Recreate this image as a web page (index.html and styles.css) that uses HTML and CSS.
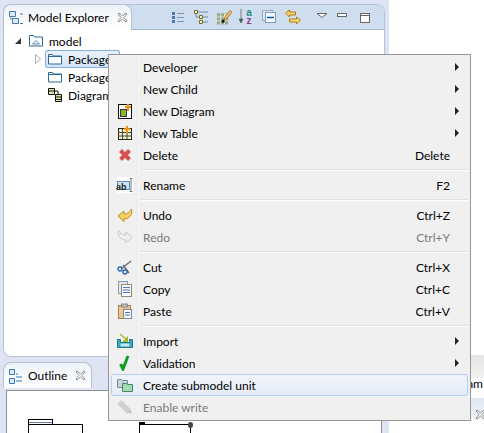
FILE: index.html
```html
<!DOCTYPE html>
<html lang="en">
<head>
    <meta charset="UTF-8">
    <title>Model Explorer</title>
    <link rel="stylesheet" href="styles.css">
</head>
<body>
    <div class="workbench">
        <section class="view explorer">
            <header class="tabbar">
                <div class="tab tab-explorer">
                    <svg class="ico" viewBox="0 0 16 16"><path d="M1.500 1.500h6v5h-6zM4.500 8.500h6v5h-6z" fill="#dfeaf5" stroke="#4a78a8"/><path d="M3 7v3M12 4h3M12 13.500h3" stroke="#4a78a8"/></svg>
                    <span class="tab-text">Model Explorer</span>
                    <svg class="close" viewBox="0 0 11 11"><path d="M1 2l1-1 3.500 3 3.500-3 1 1-3 3.500 3 3.500-1 1-3.500-3-3.500 3-1-1 3-3.500z" fill="#fff" stroke="#8a8a8a"/></svg>
                </div>
                <div class="tools">
                    <svg class="ico" viewBox="0 0 16 16"><path d="M2 3h3v3H2zM2 7h3v3H2zM2 11h3v3H2z" fill="#4a78a8"/><path d="M7 4.500h7M7 8.500h7M7 12.500h7" stroke="#7a96b4"/></svg>
                    <svg class="ico" viewBox="0 0 16 16"><path d="M1.500 1.500h3v3h-3zM6.500 6.500h3v3h-3zM6.500 11.500h3v3h-3z" fill="#f8f0c8" stroke="#7a6a20"/><path d="M5 3h10M10 8h5M10 13h5M3 5v3h3" fill="none" stroke="#6a8ab0"/></svg>
                    <svg class="ico" viewBox="0 0 17 16"><path d="M1 4h12v12H1z" fill="#9aa88a"/><path d="M1 8h12M1 12h12M5 4v12M9 4v12" stroke="#e8e8e0"/><path d="M9 5h4v3H9z" fill="#f6e8b0"/><path d="M9 9l6-8 2 2-6 7-3 2z" fill="#f0c878" stroke="#a07020"/><path d="M6 11h3v3H6z" fill="#111"/></svg>
                    <div class="sort">
                        <svg class="sort-arrow" viewBox="0 0 4 14"><path d="M2 0v10M0 10h4l-2 4z" fill="#555" stroke="#666" stroke-width="0.800"/></svg>
                        <div class="sort-letters"><span class="sort-a">a</span><span class="sort-z">z</span></div>
                    </div>
                    <svg class="ico" viewBox="0 0 16 16"><rect x="0.500" y="1.500" width="10" height="10" fill="#dfe8f0" stroke="#9ab"/><rect x="3.500" y="3.500" width="10" height="10" fill="#f4f8fc" stroke="#7a9ab8"/><path d="M5 8.500h7" stroke="#0a5aa0" stroke-width="1.500"/></svg>
                    <svg class="ico" viewBox="0 0 16 16"><path d="M0.500 4l4-3v2h6v3h-6v2zM15.500 11l-4-3v2h-7v3h7v2z" fill="#f6d878" stroke="#b07810"/></svg>
                    <svg class="ico menu-arrow" viewBox="0 0 16 16"><path d="M3 4.500h10l-5 4z" fill="#fff" stroke="#666"/></svg>
                    <svg class="ico" viewBox="0 0 16 16"><rect x="0.500" y="4.500" width="9" height="3" fill="#fff" stroke="#666"/></svg>
                    <svg class="ico" viewBox="0 0 16 16"><rect x="0.500" y="4.500" width="9" height="9" fill="#fff" stroke="#666"/><path d="M0 6.500h10" stroke="#666"/></svg>
                </div>
            </header>
            <div class="tree">
                <div class="node root">
                    <svg class="twist" viewBox="0 0 6 8"><path d="M6 1v6H0z" fill="#333"/></svg>
                    <div class="cell">
                        <svg class="ico" viewBox="0 0 16 16"><path d="M1.500 2.500h4l1 1.500h8v9h-13z" fill="#fff" stroke="#2a6a9a"/><path d="M4.500 11l3.500-3.500 3.500 3.500z" fill="none" stroke="#5a8ab0"/></svg>
                        <span>model</span>
                    </div>
                </div>
                <div class="node child">
                    <svg class="twist" viewBox="0 0 6 10"><path d="M0.500 0.500l5 4.500-5 4.500z" fill="#fff" stroke="#aaa"/></svg>
                    <div class="cell selected">
                        <svg class="ico" viewBox="0 0 16 16"><path d="M1.500 3.500h4l1 1.500h8v8h-13z" fill="#fff" stroke="#2a6a9a"/><path d="M1.500 5.500h13" stroke="#2a6a9a"/></svg>
                        <span>Package1</span>
                    </div>
                </div>
                <div class="node child">
                    <span class="twist"></span>
                    <div class="cell">
                        <svg class="ico" viewBox="0 0 16 16"><path d="M1.500 3.500h4l1 1.500h8v8h-13z" fill="#fff" stroke="#2a6a9a"/><path d="M1.500 5.500h13" stroke="#2a6a9a"/></svg>
                        <span>Package2</span>
                    </div>
                </div>
                <div class="node child">
                    <span class="twist"></span>
                    <div class="cell">
                        <svg class="ico" viewBox="0 0 16 16"><path d="M1.500 1.500h6v6h-6zM8.500 7.500h6v7h-6z" fill="#d8e8a0" stroke="#111"/><path d="M2 4h5M9 10h5M9 12.500h5M7 4h4v3" fill="none" stroke="#111"/></svg>
                        <span>Diagram</span>
                    </div>
                </div>
            </div>
        </section>
        <section class="lower">
            <div class="outline">
                <header class="tabbar tabbar-plain">
                    <div class="tab tab-outline">
                        <svg class="ico" viewBox="0 0 16 16"><path d="M1.500 1.500h5v5h-5zM1.500 10.500h5v5h-5z" fill="#dfeaf5" stroke="#3a78b8"/><path d="M8 6h2M8 9h6M8 13h6" stroke="#3a78b8"/></svg>
                        <span class="tab-text">Outline</span>
                        <svg class="close" viewBox="0 0 11 11"><path d="M1 2l1-1 3.500 3 3.500-3 1 1-3 3.500 3 3.500-1 1-3.500-3-3.500 3-1-1 3-3.500z" fill="#fff" stroke="#8a8a8a"/></svg>
                    </div>
                </header>
                <div class="canvas">
                    <div class="shape left-shape"><span class="shape-title"></span></div>
                    <div class="shape right-shape"><span class="shape-dot"></span><span class="shape-ring"></span></div>
                </div>
            </div>
            <div class="side">
                <div class="side-tabs"></div>
                <div class="side-label">am</div>
                <header class="side-bar">
                    <svg class="close" viewBox="0 0 11 11"><path d="M1 2l1-1 3.500 3 3.500-3 1 1-3 3.500 3 3.500-1 1-3.500-3-3.500 3-1-1 3-3.500z" fill="#fff" stroke="#8a8a8a"/></svg>
                </header>
            </div>
        </section>
    </div>

    <div class="menu">
        <div class="item"><span class="slot"></span><span class="label">Developer</span><span class="arrow"></span></div>
        <div class="item"><span class="slot"></span><span class="label">New Child</span><span class="arrow"></span></div>
        <div class="item">
            <span class="slot"><svg class="ico" viewBox="0 0 16 16"><rect x="1.500" y="1.500" width="13" height="14" fill="#fff" stroke="#111"/><rect x="3.500" y="6.500" width="6" height="7" fill="#8ab820" stroke="#335"/><path d="M11 1v7M8 4h6" stroke="#f09010" stroke-width="2"/></svg></span>
            <span class="label">New Diagram</span><span class="arrow"></span>
        </div>
        <div class="item">
            <span class="slot"><svg class="ico" viewBox="0 0 16 16"><rect x="1.500" y="3.500" width="13" height="11" fill="#f4f0c0" stroke="#222"/><path d="M1 7.500h14M1 11h14M5.500 4v10M10 4v10" stroke="#444"/><path d="M10 1v7M7 4h6" stroke="#f09010" stroke-width="2"/></svg></span>
            <span class="label">New Table</span><span class="arrow"></span>
        </div>
        <div class="item">
            <span class="slot"><svg class="ico" viewBox="0 0 16 16"><path d="M3.500 3.500l9 9M12.500 3.500l-9 9" stroke="#d9514f" stroke-width="4"/></svg></span>
            <span class="label">Delete</span><span class="key">Delete</span>
        </div>
        <div class="sep"></div>
        <div class="item">
            <span class="slot"><svg class="ico" viewBox="0 0 16 16"><rect x="0" y="0" width="16" height="16" fill="#fff"/><rect x="0.500" y="4.500" width="12" height="8" fill="#cfe2f5" stroke="#5a8ac0"/><path d="M12.500 1.500h3M12.500 14.500h3M14 2v12" stroke="#777"/></svg><span class="ab">ab</span></span>
            <span class="label">Rename</span><span class="key">F2</span>
        </div>
        <div class="sep"></div>
        <div class="item">
            <span class="slot"><svg class="ico" viewBox="0 0 16 16"><path d="M1 9l6-5v3c3 0 5-1 7.500-5 1.500 6-2.500 10-7.500 10v2.500z" fill="#f6d060" stroke="#c09020"/></svg></span>
            <span class="label">Undo</span><span class="key">Ctrl+Z</span>
        </div>
        <div class="item off">
            <span class="slot"><svg class="ico" viewBox="0 0 16 16"><path d="M15 8.500l-6-5.500v3C6 6 3.500 5 1.500 1.500 0 7 4 11 9 11v3z" fill="#f0f0f0" stroke="#c8c8c8"/></svg></span>
            <span class="label">Redo</span><span class="key">Ctrl+Y</span>
        </div>
        <div class="sep"></div>
        <div class="item">
            <span class="slot"><svg class="ico" viewBox="0 0 16 16"><path d="M4.500 9.500L14 2M6 6l6 8" stroke="#667" stroke-width="1.300" fill="none"/><circle cx="3" cy="10" r="2" fill="none" stroke="#2a6aa8" stroke-width="1.400"/><circle cx="8" cy="13" r="2" fill="none" stroke="#2a6aa8" stroke-width="1.400"/></svg></span>
            <span class="label">Cut</span><span class="key">Ctrl+X</span>
        </div>
        <div class="item">
            <span class="slot"><svg class="ico" viewBox="0 0 16 16"><rect x="1.500" y="0.500" width="9" height="12" fill="#dfe6ee" stroke="#8a9aaa"/><rect x="4.500" y="3.500" width="10" height="12" fill="#f6f8fb" stroke="#9a8a70"/><path d="M6 6.500h7M6 9h7M6 11.500h7" stroke="#4a78b0"/></svg></span>
            <span class="label">Copy</span><span class="key">Ctrl+C</span>
        </div>
        <div class="item">
            <span class="slot"><svg class="ico" viewBox="0 0 16 16"><rect x="1.500" y="2.500" width="12" height="13" fill="#e8c890" stroke="#a08050"/><rect x="4.500" y="1" width="6" height="3" fill="#bbb" stroke="#888"/><rect x="6.500" y="6.500" width="8" height="9" fill="#f6f8fb" stroke="#7a8a9a"/><path d="M8 9.500h5M8 12h5" stroke="#4a78b0"/></svg></span>
            <span class="label">Paste</span><span class="key">Ctrl+V</span>
        </div>
        <div class="sep"></div>
        <div class="item">
            <span class="slot"><svg class="ico" viewBox="0 0 16 16"><path d="M0.500 6.500v8h15v-8h-3v3h-9v-3z" fill="#3aa8c0" stroke="#1a7a90"/><path d="M3.500 10.500h9v3h-9z" fill="#bfe6ee"/><path d="M3 1l6 5" stroke="#a8b820" stroke-width="1.500"/><path d="M11 3v6H5z" fill="#a8b820"/></svg></span>
            <span class="label">Import</span><span class="arrow"></span>
        </div>
        <div class="item">
            <span class="slot"><svg class="ico" viewBox="0 0 16 16"><path d="M3.500 9l2.500 5c2-5 3-8 5-13" fill="none" stroke="#10a020" stroke-width="3"/></svg></span>
            <span class="label">Validation</span><span class="arrow"></span>
        </div>
        <div class="item active">
            <span class="slot"><svg class="ico" viewBox="0 0 16 16"><path d="M0.500 2.500h4l1 1h5v7h-10z" fill="#c8d4dc" stroke="#7a8a9a"/><path d="M5.500 6.500h4l1 1h5v7h-10z" fill="#a8d8b0" stroke="#3a8a70"/></svg></span>
            <span class="label">Create submodel unit</span>
        </div>
        <div class="item off">
            <span class="slot"><svg class="ico" viewBox="0 0 16 16"><path d="M2.500 3l10 10" stroke="#d0d0d0" stroke-width="6"/><path d="M13 11l2 4-4-2z" fill="#bbb"/></svg></span>
            <span class="label">Enable write</span>
        </div>
    </div>
</body>
</html>
```

FILE: styles.css
```css
* {
    box-sizing: border-box;
}
body {
    margin: 0;
    width: 484px;
    height: 433px;
    overflow: hidden;
    background: #fff;
    font-family: Lato, "Open Sans", Arial, sans-serif;
    font-size: 12px;
    color: #000;
}
.workbench {
    display: flex;
    flex-direction: column;
    gap: 5px;
    height: 433px;
    padding: 4px 0 0 3px;
    background: linear-gradient(to right, #dfe4f4 0, #dfe4f4 389px, #fff 389px);
}
.ico {
    width: 16px;
    height: 16px;
    flex: none;
    display: block;
}
.close {
    width: 11px;
    height: 11px;
    flex: none;
}
.explorer {
    width: 382px;
    height: 353px;
    background: #fff;
    border: 1px solid #b8c0d4;
    border-top: 0;
    border-radius: 8px;
}
.tabbar {
    display: flex;
    height: 26px;
    background: #cfdeee;
    border-bottom: 1px solid #a9b6c8;
    border-top: 1px solid #b8c0d4;
    border-radius: 8px 8px 0 0;
}
.tabbar-plain {
    height: 28px;
    background: none;
    border: 0;
}
.tab {
    display: flex;
    align-items: center;
    height: 26px;
    padding-left: 4px;
    background: linear-gradient(#eef3f9, #fff);
    border: 1px solid #b8c0d4;
    border-bottom: 0;
    border-radius: 8px 8px 0 0;
}
.tab-explorer {
    width: 129px;
    margin: -1px 0 0 -1px;
}
.tab-outline {
    width: 89px;
}
.tab-text {
    margin: 0 8px 0 4px;
}
.tools {
    display: flex;
    align-items: center;
    gap: 7px;
    margin-left: 38px;
}
.sort {
    display: flex;
    gap: 1px;
    width: 16px;
    height: 16px;
    flex: none;
}
.sort-arrow {
    width: 4px;
    height: 14px;
    flex: none;
}
.sort-letters {
    display: flex;
    flex-direction: column;
    font: 700 10px/8px "Liberation Sans", sans-serif;
    text-align: center;
    width: 10px;
}
.sort-a {
    color: #2a8a80;
}
.sort-z {
    color: #8a3a98;
}
.menu-arrow {
    margin-left: 6px;
}
.tree {
    padding-top: 2px;
}
.node {
    display: flex;
    align-items: center;
    height: 18px;
}
.root {
    padding-left: 11px;
    gap: 7px;
}
.child {
    padding-left: 31px;
    gap: 4px;
}
.twist {
    width: 6px;
    flex: none;
}
.cell {
    display: flex;
    align-items: center;
    gap: 5px;
    width: 75px;
    height: 18px;
    padding-left: 2px;
}
.root .cell {
    padding-left: 0;
}
.selected {
    background: linear-gradient(#eaf3fd, #cfe3f9);
    box-shadow: inset 0 0 0 1px #84acdd;
    border-radius: 3px;
}
.lower {
    display: flex;
    flex: 1;
    min-height: 0;
    justify-content: space-between;
}
.outline {
    display: flex;
    flex-direction: column;
    width: 382px;
}
.canvas {
    position: relative;
    flex: 1;
    margin: 0 3px;
    background: #fff;
    border: 1px solid #8f8f8f;
    border-bottom: 0;
}
.shape {
    position: absolute;
    top: 33px;
    height: 20px;
    border: 1px solid #000;
    background: #fff;
}
.left-shape {
    left: 21px;
    width: 55px;
}
.right-shape {
    left: 132px;
    width: 52px;
}
.shape-title {
    position: absolute;
    left: -1px;
    top: -6px;
    width: 25px;
    height: 6px;
    background: linear-gradient(#fff 40%, #5a7ab8 40%, #5a7ab8 70%, #fff 70%);
    border: 1px solid #000;
}
.shape-dot {
    position: absolute;
    left: -1px;
    top: -3px;
    width: 6px;
    height: 3px;
    background: #000;
}
.shape-ring {
    position: absolute;
    right: -3px;
    top: -3px;
    width: 5px;
    height: 6px;
    background: #444;
    border-radius: 50%;
}
.side {
    width: 95px;
}
.side-tabs {
    height: 23px;
    margin-top: -7px;
    background: linear-gradient(#e4e4e4, #f2f2f2);
}
.side-label {
    height: 18px;
    padding-right: 1px;
    line-height: 11px;
    text-align: right;
    background: #fff;
}
.side-bar {
    display: flex;
    justify-content: flex-end;
    align-items: flex-end;
    height: 22px;
    margin-top: 2px;
    background: linear-gradient(#dfe6f2, #f2f5fa);
}
.side-bar .close {
    margin-right: -2px;
}
.menu {
    position: absolute;
    left: 108px;
    top: 54px;
    width: 363px;
    height: 367px;
    padding: 1px 2px;
    background: #f0f0f0;
    border: 1px solid #979797;
}
.menu::before {
    content: "";
    position: absolute;
    left: 28px;
    top: 2px;
    bottom: 2px;
    width: 2px;
    background: linear-gradient(to right, #e2e3e3, #fff);
}
.item {
    position: relative;
    display: flex;
    align-items: center;
    height: 22px;
}
.slot {
    position: relative;
    display: flex;
    align-items: center;
    justify-content: center;
    width: 32px;
    padding-right: 5px;
    flex: none;
}
.label {
    flex: 1;
}
.key {
    margin-right: 18px;
}
.arrow {
    width: 0;
    height: 0;
    margin-right: 9px;
    border-left: 4px solid #222;
    border-top: 4px solid transparent;
    border-bottom: 4px solid transparent;
}
.ab {
    position: absolute;
    left: 5px;
    top: 4px;
    font: 700 9px/12px "Liberation Sans", sans-serif;
    color: #222;
}
.off {
    color: #7a7a7a;
}
.active {
    background: linear-gradient(#f2f4fa, #e4ecf8);
    box-shadow: inset 0 0 0 1px #aecff7;
    border-radius: 3px;
}
.sep {
    position: relative;
    height: 8px;
    margin-left: 28px;
}
.sep::after {
    content: "";
    position: absolute;
    left: 2px;
    right: 0;
    top: 3px;
    height: 2px;
    background: linear-gradient(#e0e0e0 50%, #fff 50%);
}
```
